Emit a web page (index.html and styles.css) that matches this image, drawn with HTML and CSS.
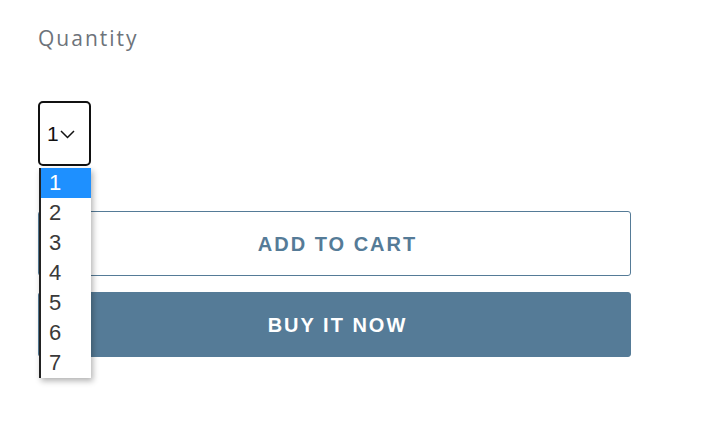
FILE: index.html
```html
<!DOCTYPE html>
<html>
<head>
<meta charset="utf-8">
<link rel="stylesheet" href="styles.css">
</head>
<body>
<div class="product-form">
  <label class="qty-label">Quantity</label>
  <div class="select-wrap">
    <div class="select">
      <span class="select-value">1</span>
      <svg class="chevron" width="15" height="9" viewBox="0 0 15 9"><path d="M1 1 L7.5 7.5 L14 1" fill="none" stroke="#111" stroke-width="1.5"/></svg>
    </div>
    <ul class="options">
      <li class="option active">1</li>
      <li class="option">2</li>
      <li class="option">3</li>
      <li class="option">4</li>
      <li class="option">5</li>
      <li class="option">6</li>
      <li class="option">7</li>
    </ul>
  </div>
  <button class="btn btn-outline">ADD TO CART</button>
  <button class="btn btn-solid">BUY IT NOW</button>
</div>
</body>
</html>
```
FILE: styles.css
```css
html, body {
  margin: 0;
  padding: 0;
  background: #fff;
}
body {
  min-height: 440px;
}
.product-form {
  display: flex;
  flex-direction: column;
  align-items: flex-start;
  padding: 23px 0 90px 38px;
  width: 593px;
  font-family: "Open Sans", "Liberation Sans", sans-serif;
}
.qty-label {
  font-size: 21px;
  line-height: 30px;
  color: #6d737a;
  letter-spacing: 2px;
  margin-bottom: 48px;
}
.select-wrap {
  position: relative;
  margin-bottom: 45px;
  z-index: 2;
}
.select {
  box-sizing: border-box;
  width: 53px;
  height: 65px;
  border: 2px solid #111;
  border-radius: 5px;
  display: flex;
  align-items: center;
  padding-left: 7px;
  gap: 1px;
  font-family: "Liberation Sans", sans-serif;
  font-size: 21px;
  color: #111;
  background: #fff;
}
.chevron {
  margin-top: 1px;
}
.options {
  position: absolute;
  top: 67px;
  left: 1px;
  width: 52px;
  margin: 0;
  padding: 0;
  list-style: none;
  background: #fff;
  border-left: 2px solid #222;
  box-sizing: border-box;
  box-shadow: 2px 3px 6px rgba(0,0,0,0.3);
}
.option {
  height: 30px;
  line-height: 30px;
  padding-left: 8px;
  font-family: "Liberation Sans", sans-serif;
  font-size: 22px;
  color: #3a3a3a;
}
.option.active {
  background: #1e90ff;
  color: #fff;
}
.btn {
  box-sizing: border-box;
  width: 593px;
  height: 65px;
  border-radius: 3px;
  padding: 2px 0 0 6px;
  font-family: "Liberation Sans", sans-serif;
  font-weight: bold;
  font-size: 20px;
  letter-spacing: 2px;
  cursor: pointer;
}
.btn-outline {
  background: #fff;
  border: 1px solid #557b97;
  color: #557b97;
  margin-bottom: 16px;
}
.btn-solid {
  background: #557b97;
  border: 1px solid #557b97;
  color: #fff;
}
```
